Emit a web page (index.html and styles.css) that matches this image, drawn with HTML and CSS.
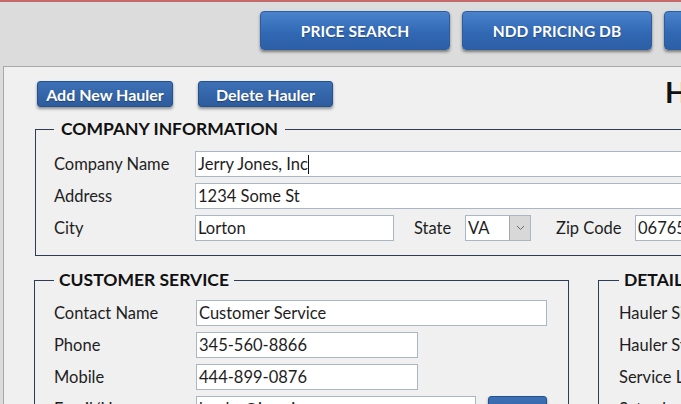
FILE: index.html
```html
<!DOCTYPE html>
<html lang="en">
<head>
<meta charset="utf-8">
<title>Hauler Information</title>
<link rel="stylesheet" href="styles.css">
</head>
<body>
<header class="topbar">
  <button class="navbtn">PRICE SEARCH</button>
  <button class="navbtn">NDD PRICING DB</button>
  <button class="navbtn">HAULER LIST</button>
</header>
<main class="panel">
  <div class="actions">
    <button class="actbtn btn-add">Add New Hauler</button>
    <button class="actbtn btn-del">Delete Hauler</button>
    <h1 class="title">HAULER INFORMATION</h1>
  </div>

  <fieldset class="group company">
    <legend>COMPANY INFORMATION</legend>
    <div class="row">
      <label class="lbl">Company Name</label>
      <div class="field wide">Jerry Jones, Inc<span class="caret"></span></div>
    </div>
    <div class="row">
      <label class="lbl">Address</label>
      <div class="field wide">1234 Some St</div>
    </div>
    <div class="row">
      <label class="lbl">City</label>
      <div class="field city">Lorton</div>
      <label class="lbl state-lbl">State</label>
      <div class="combo">
        <span class="combo-val">VA</span>
        <span class="combo-btn"><svg width="9" height="6" viewBox="0 0 9 6"><polyline points="1,1 4.5,4.5 8,1" fill="none" stroke="#6b6b6b" stroke-width="1"/></svg></span>
      </div>
      <label class="lbl zip-lbl">Zip Code</label>
      <div class="field zip">06765</div>
    </div>
  </fieldset>

  <div class="lower">
    <fieldset class="group service">
      <legend>CUSTOMER SERVICE</legend>
      <div class="row">
        <label class="lbl">Contact Name</label>
        <div class="field contact">Customer Service</div>
      </div>
      <div class="row">
        <label class="lbl">Phone</label>
        <div class="field phone">345-560-8866</div>
      </div>
      <div class="row">
        <label class="lbl">Mobile</label>
        <div class="field phone">444-899-0876</div>
      </div>
      <div class="row">
        <label class="lbl">Email/Username</label>
        <div class="field email">hauler@jerryjones.com</div>
        <button class="actbtn mailbtn">Send</button>
      </div>
    </fieldset>

    <fieldset class="group details">
      <legend>DETAILS</legend>
      <div class="row"><label class="lbl">Hauler Since</label></div>
      <div class="row"><label class="lbl">Hauler Status</label></div>
      <div class="row"><label class="lbl">Service Level</label></div>
      <div class="row"><label class="lbl">Saturday Pickup</label></div>
    </fieldset>
  </div>
</main>
</body>
</html>
```

FILE: styles.css
```css
html, body {
  margin: 0;
  padding: 0;
}
body {
  width: 681px;
  height: 404px;
  overflow: hidden;
  background: #dcdcdc;
  border-top: 2px solid #c46a6a;
  box-sizing: border-box;
  font-family: Lato, "Open Sans", sans-serif;
  color: #1e1e1e;
}

/* top navigation */
.topbar {
  display: flex;
  gap: 12px;
  height: 64px;
  box-sizing: border-box;
  padding: 9px 0 0 260px;
  width: 1100px;
}
.navbtn {
  flex: none;
  width: 190px;
  height: 39px;
  border: 1px solid #2b5da0;
  border-radius: 4px;
  background: linear-gradient(#4a82cc, #3269b4 55%, #2c5fa6);
  box-shadow: 0 2px 3px rgba(0, 0, 0, 0.45);
  color: #ffffff;
  font-family: Lato, sans-serif;
  font-weight: 700;
  font-size: 15.5px;
  letter-spacing: 0.1px;
  text-shadow: 0 1px 1px rgba(0, 0, 0, 0.3);
  padding: 0;
}

/* main panel */
.panel {
  margin-left: 3px;
  width: 1100px;
  height: 400px;
  background: #f0f0f0;
  border-top: 1px solid #a8a8a8;
  border-left: 1px solid #a8a8a8;
}
.actions {
  display: flex;
  align-items: flex-start;
  padding: 14px 0 0 33px;
}
.actbtn {
  flex: none;
  height: 26px;
  border: 1px solid #24508c;
  border-radius: 3px;
  background: linear-gradient(#3d70b6, #2d5c9e);
  box-shadow: 0 2px 3px rgba(0, 0, 0, 0.4);
  color: #ffffff;
  font-family: Lato, sans-serif;
  font-weight: 700;
  font-size: 16px;
  text-shadow: 0 1px 1px rgba(0, 0, 0, 0.35);
  padding: 0;
}
.btn-add { width: 136px; }
.btn-del { width: 135px; margin-left: 25px; }
.title {
  margin: -6px 0 0 332px;
  font-size: 29px;
  line-height: 34px;
  font-weight: 700;
  color: #111;
  white-space: nowrap;
}

/* groups */
.group {
  margin: 0;
  border: 1px solid #2e3c58;
  min-width: 0;
}
.group legend {
  font-weight: 700;
  font-size: 17.5px;
  line-height: 20px;
  color: #111;
}
.company {
  margin: 10px 0 0 31px;
  width: 1000px;
  padding: 12px 0 14px 18px;
}
.company legend { padding: 0 7px; }

.row {
  display: flex;
  align-items: center;
  height: 26px;
  margin-bottom: 6px;
}
.row:last-child { margin-bottom: 0; }

.lbl {
  flex: none;
  width: 141px;
  font-size: 16.5px;
  line-height: 26px;
  white-space: nowrap;
}
.field {
  flex: none;
  height: 26px;
  box-sizing: border-box;
  border: 1px solid #aab6c4;
  background: #ffffff;
  font-size: 16.5px;
  line-height: 24px;
  padding-left: 2px;
  white-space: nowrap;
  overflow: hidden;
}
.caret {
  display: inline-block;
  width: 1px;
  height: 19px;
  background: #111;
  vertical-align: -4px;
}
.wide { width: 700px; }
.city { width: 199px; }
.state-lbl { width: 51px; margin-left: 20px; }
.combo {
  flex: none;
  display: flex;
  width: 66px;
  height: 26px;
  box-sizing: border-box;
  border: 1px solid #aab6c4;
  background: #ffffff;
}
.combo-val {
  flex: 1;
  font-size: 16.5px;
  line-height: 24px;
  padding-left: 2px;
}
.combo-btn {
  width: 20px;
  background: #d8d8d8;
  border-left: 1px solid #a8a8a8;
  display: flex;
  align-items: center;
  justify-content: center;
}
.zip-lbl { width: 79px; margin-left: 25px; }
.zip { width: 120px; }

/* lower section */
.lower {
  display: flex;
  align-items: flex-start;
  margin: 14px 0 0 30px;
}
.service {
  width: 535px;
  box-sizing: border-box;
  padding: 10px 0 20px 19px;
}
.service legend { padding: 0 5px; }
.service .lbl { width: 142px; }
.contact { width: 351px; }
.phone { width: 222px; }
.email { width: 280px; }
.mailbtn { width: 59px; margin-left: 12px; }

.details {
  margin-left: 29px;
  width: 300px;
  padding: 10px 0 20px 20px;
}
.details legend { padding: 0 5px; }
```
